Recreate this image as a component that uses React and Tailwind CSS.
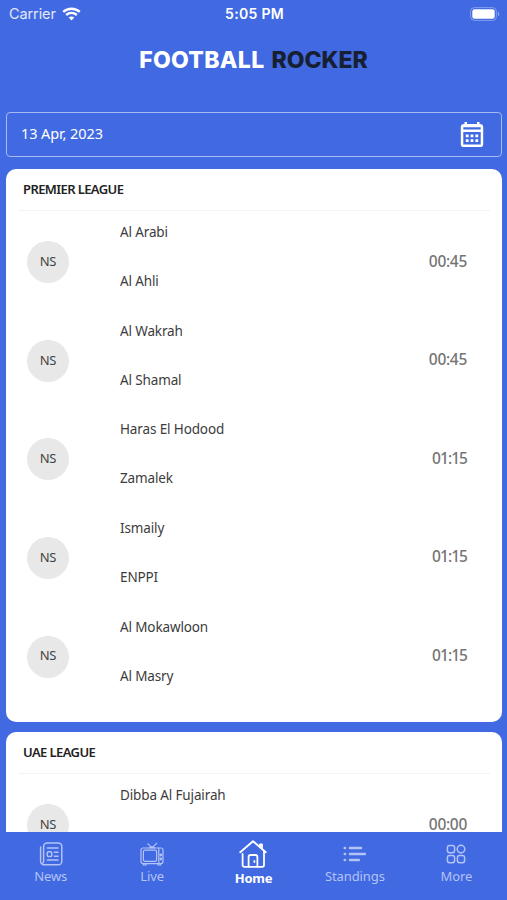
import React, { useState } from 'react';
import clsx from 'clsx';

const leagues = [
  {
    name: 'PREMIER LEAGUE',
    matches: [
      { home: 'Al Arabi', away: 'Al Ahli', time: '00:45' },
      { home: 'Al Wakrah', away: 'Al Shamal', time: '00:45' },
      { home: 'Haras El Hodood', away: 'Zamalek', time: '01:15' },
      { home: 'Ismaily', away: 'ENPPI', time: '01:15' },
      { home: 'Al Mokawloon', away: 'Al Masry', time: '01:15' },
    ],
  },
  {
    name: 'UAE LEAGUE',
    matches: [{ home: 'Dibba Al Fujairah', time: '00:00' }],
  },
];

const WifiIcon = () => (
  <svg width="19" height="14" viewBox="0 0 19 14" fill="none" stroke="white" strokeWidth="2.4">
    <path d="M1.2 4.9C5.8 .6 13.2 .6 17.8 4.9" />
    <path d="M4.2 8C7.2 5.2 11.8 5.2 14.8 8" />
    <path d="M9.5 13.4 6.7 10.6C8.3 9.2 10.7 9.2 12.3 10.6Z" fill="white" stroke="none" />
  </svg>
);

const BatteryIcon = () => (
  <svg width="30" height="14" viewBox="0 0 30 14" fill="none">
    <rect x=".6" y=".6" width="25.8" height="12.8" rx="3.8" stroke="white" strokeOpacity=".35" />
    <rect x="2.3" y="2.3" width="22.4" height="9.4" rx="2.2" fill="white" />
    <path d="M28 4.8C29.5 5.5 29.5 8.5 28 9.2Z" fill="white" fillOpacity=".5" />
  </svg>
);

const CalendarIcon = () => (
  <svg width="24" height="26" viewBox="0 0 24 26" fill="white">
    <path
      fillRule="evenodd"
      d="M4.5 0H7V2H17V0H19.5V2H20.5A3 3 0 0 1 23.2 4.8V22.2A2.8 2.8 0 0 1 20.4 25H3.6A2.8 2.8 0 0 1 .8 22.2V4.8A3 3 0 0 1 3.5 2H4.5ZM3.3 5.2V7.4H20.7V5.2ZM3.3 10V22.4H20.7V10Z"
    />
    <path d="M5.8 12.4h2.8v2.8H5.8zM10.6 12.4h2.8v2.8h-2.8zM15.4 12.4h2.8v2.8h-2.8zM5.8 17.2h2.8V20H5.8zM10.6 17.2h2.8V20h-2.8zM15.4 17.2h2.8V20h-2.8z" />
  </svg>
);

const NewsIcon = () => (
  <svg width="24" height="24" viewBox="0 0 24 24" fill="none" stroke="currentColor" strokeWidth="1.5" strokeLinecap="round">
    <path d="M4.6 4.4A3.4 3.4 0 0 1 8 1H19.4A3.4 3.4 0 0 1 22.8 4.4V19.4A3.4 3.4 0 0 1 19.4 22.8H5A3.4 3.4 0 0 1 1.6 19.4V5" />
    <path d="M4.6 4.4V19.6A2 2 0 0 1 3.4 21.4" />
    <path d="M8.4 6H19M15.4 10.2H19M15.4 14.2H19M8.4 18H19" />
    <rect x="8.2" y="9.8" width="4.6" height="4.8" rx="1.4" />
  </svg>
);

const TvIcon = () => (
  <svg width="24" height="24" viewBox="0 0 24 24" fill="none" stroke="currentColor" strokeWidth="1.2" strokeLinecap="round">
    <path d="M8 1.8 12 6 16.8 1.2M9.5 6 12 4.6 14.5 6" />
    <rect x="1" y="6" width="22" height="15.6" rx="2" />
    <rect x="3.4" y="8.2" width="13.2" height="11.2" rx="1.6" />
    <path d="M18.8 6.2V21.4M3.4 21.8V23H6V21.8M18 21.8V23H20.6V21.8" />
    <circle cx="20.8" cy="13" r=".8" />
    <circle cx="20.8" cy="17" r=".8" />
  </svg>
);

const HomeIcon = () => (
  <svg width="28" height="28" viewBox="0 0 28 28" fill="none" stroke="currentColor" strokeWidth="1.8" strokeLinecap="round" strokeLinejoin="round">
    <path d="M1.2 12.2 14 1.2 26.8 12.2" />
    <path d="M21 6.8V4.4H23V8.6" />
    <path d="M3.6 14V25A1.8 1.8 0 0 0 5.4 26.8H23.2A1.8 1.8 0 0 0 25 25V11.2" />
    <path d="M9.6 26.6V17A2 2 0 0 1 11.6 15H16.4A2 2 0 0 1 18.4 17V26.6M15.4 21V22" />
  </svg>
);

const StandingsIcon = () => (
  <svg width="24" height="18" viewBox="0 0 24 18" fill="none" stroke="currentColor" strokeWidth="2.6" strokeLinecap="round">
    <path d="M1.8 3H2M7 3H18M1.8 9H2M7 9H21.8M1.8 15H2M7 15H15.8" />
  </svg>
);

const MoreIcon = () => (
  <svg width="20" height="20" viewBox="0 0 20 20" fill="none" stroke="currentColor" strokeWidth="1.5">
    <rect x="1.4" y="1.4" width="7.2" height="7.4" rx="2.2" />
    <circle cx="15" cy="5.1" r="3.8" />
    <rect x="1.4" y="11.4" width="7.2" height="7.4" rx="2.2" />
    <rect x="11.4" y="11.4" width="7.2" height="7.4" rx="2.2" />
  </svg>
);

const tabs = [
  { label: 'News', icon: NewsIcon },
  { label: 'Live', icon: TvIcon },
  { label: 'Home', icon: HomeIcon },
  { label: 'Standings', icon: StandingsIcon },
  { label: 'More', icon: MoreIcon },
];

const MatchRow = ({ match }) => (
  <div className="flex h-[98.6px] items-center pl-[21px] pr-[35px]">
    <div className="flex size-[42px] items-center justify-center rounded-full bg-[#e8e8e8] pb-px text-[13px] tracking-[-0.2px] text-[#444]">
      NS
    </div>
    <div className="mb-[11px] ml-[51px] flex h-[69px] flex-1 flex-col justify-between text-[13.5px] leading-5 tracking-[-0.13px] text-[#3c3c3c]">
      <span>{match.home}</span>
      {match.away && <span>{match.away}</span>}
    </div>
    <span
      className={clsx(
        'pb-[2px] text-[15.5px] font-medium text-[#757575]',
        match.time.startsWith('01') ? 'tracking-[-0.95px]' : 'tracking-[-0.3px]'
      )}
    >
      {match.time}
    </span>
  </div>
);

const LeagueCard = ({ league }) => (
  <section className="shrink-0 rounded-[10px] bg-white pb-4">
    <div className="mx-3 flex h-[42px] items-center border-b border-[#f3f3f5] px-[5px]">
      <h2 className="text-[13px] font-semibold tracking-[-0.6px] text-[#222]">{league.name}</h2>
    </div>
    <div className="pt-[2px]">
      {league.matches.map((match) => (
        <MatchRow key={match.home} match={match} />
      ))}
    </div>
  </section>
);

const App = () => {
  const [activeTab, setActiveTab] = useState('Home');

  return (
    <div className="flex h-[900px] w-[507px] flex-col overflow-hidden bg-[#4169e1] font-['Noto_Sans',sans-serif]">
      {/* Status bar */}
      <div className="grid h-7 shrink-0 grid-cols-3 items-center pb-px pl-[9px] pr-[7px] font-['Inter',sans-serif] text-[14.5px] text-white">
        <div className="flex items-center gap-[6px]">
          <span className="tracking-[-0.1px] text-white/85">Carrier</span>
          <WifiIcon />
        </div>
        <span className="text-center text-[14px] font-semibold tracking-[0.3px]">5:05 PM</span>
        <div className="flex justify-end">
          <BatteryIcon />
        </div>
      </div>

      {/* Logo */}
      <header className="flex h-[84px] shrink-0 items-center justify-center gap-[7px] pb-[20px] font-['Inter',sans-serif] text-[23px] font-extrabold">
        <span className="tracking-[0.3px] text-white">FOOTBALL</span>
        <span className="text-[#171f33]">ROCKER</span>
      </header>

      {/* Date picker */}
      <button className="mx-[6px] flex h-[45px] w-[496px] shrink-0 items-center justify-between rounded-[4px] border border-[#a5b9f3] pl-[14px] pr-[17px] text-[14.5px] text-white">
        <span className="pb-[2px] tracking-[-0.1px]">13 Apr, 2023</span>
        <CalendarIcon />
      </button>

      {/* Leagues */}
      <main className="mx-[6px] mt-3 flex min-h-0 w-[496px] flex-1 flex-col gap-[10px] overflow-hidden">
        {leagues.map((league) => (
          <LeagueCard key={league.name} league={league} />
        ))}
      </main>

      {/* Bottom tabs */}
      <nav className="grid h-[68px] shrink-0 grid-cols-5">
        {tabs.map(({ label, icon: Icon }) => (
          <button
            key={label}
            onClick={() => setActiveTab(label)}
            className={clsx(
              'flex flex-col items-center text-[13px] leading-5',
              activeTab === label ? 'font-bold tracking-[-0.3px] text-white' : 'tracking-[-0.1px] text-[#b3c3f6]'
            )}
          >
            <span className={clsx('flex h-11 items-center', activeTab === label ? '-mb-2' : '-mb-[10px]')}>
              <Icon />
            </span>
            {label}
          </button>
        ))}
      </nav>
    </div>
  );
};

export default App;
